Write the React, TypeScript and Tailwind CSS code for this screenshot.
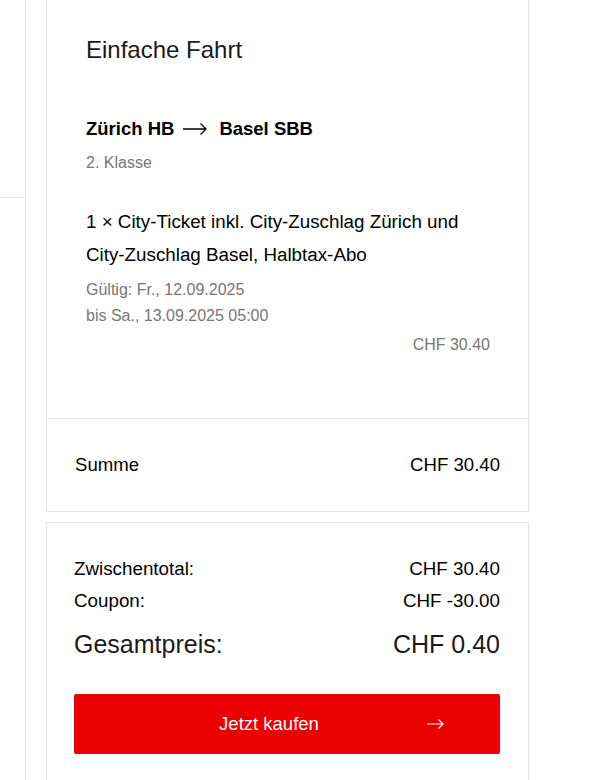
import React from 'react'

function RouteArrow() {
    return (
        <svg width="24" height="12" viewBox="0 0 24 12" fill="none" className="ml-[9px] mr-[12px] shrink-0">
            <path d="M0 6H23M17.5 0.5L23 6L17.5 11.5" stroke="#000" strokeWidth="1.3" />
        </svg>
    )
}

function ButtonArrow() {
    return (
        <svg width="17" height="10" viewBox="0 0 17 10" fill="none" className="shrink-0">
            <path d="M0 5H16M11.5 0.5L16 5L11.5 9.5" stroke="#fff" strokeWidth="1.2" />
        </svg>
    )
}

export default function App() {
    return (
        <div className="flex min-h-[780px] bg-white text-black font-['Liberation_Sans',Arial,sans-serif]">
            {/* linke Spalte */}
            <div className="w-[26px] shrink-0 border-r border-[#e5e5e5]">
                <div className="h-[198px] border-b border-[#e5e5e5]" />
            </div>

            <div className="ml-[20px] w-[483px] shrink-0">
                {/* Warenkorb */}
                <div className="border-x border-b border-[#e5e5e5]">
                    <div className="pl-[39px] pr-[38px] pt-[36px] pb-[63px]">
                        <h2 className="text-[24px] leading-[28px] text-[#1a1a1a]">Einfache Fahrt</h2>

                        <div className="mt-[53px] flex items-center text-[18.5px] leading-[24px] font-bold">
                            <span>Zürich HB</span>
                            <RouteArrow />
                            <span>Basel SBB</span>
                        </div>
                        <div className="mt-[12px] text-[16px] leading-[20px] text-[#767676]">2. Klasse</div>

                        <p className="mt-[32px] text-[18.8px] leading-[33px]">
                            1 × City-Ticket inkl. City-Zuschlag Zürich und City-Zuschlag Basel, Halbtax-Abo
                        </p>
                        <div className="mt-[6px] text-[16px] leading-[26px] text-[#767676]">
                            <div>Gültig: Fr., 12.09.2025</div>
                            <div>bis Sa., 13.09.2025 05:00</div>
                        </div>
                        <div className="mt-[6px] text-right text-[16px] leading-[20px] text-[#767676]">CHF 30.40</div>
                    </div>

                    <div className="flex items-center justify-between border-t border-[#e5e5e5] pl-[28px] pr-[28px] py-[34px] text-[18.6px] leading-[24px]">
                        <span>Summe</span>
                        <span>CHF 30.40</span>
                    </div>
                </div>

                {/* Total */}
                <div className="mt-[10px] border-x border-t border-[#e5e5e5] pl-[27px] pr-[28px] pt-[30px] pb-[30px]">
                    <div className="flex justify-between text-[18.8px] leading-[32px]">
                        <span>Zwischentotal:</span>
                        <span>CHF 30.40</span>
                    </div>
                    <div className="flex justify-between text-[18.8px] leading-[32px]">
                        <span>Coupon:</span>
                        <span>CHF -30.00</span>
                    </div>
                    <div className="mt-[11px] flex justify-between text-[25px] leading-[32px] text-[#1a1a1a]">
                        <span>Gesamtpreis:</span>
                        <span>CHF 0.40</span>
                    </div>

                    <button className="mt-[34px] flex h-[60px] w-full items-center rounded-[2px] bg-[#eb0000] text-white">
                        <span className="flex-1 pl-[37px] text-center text-[18.5px] leading-[24px]">Jetzt kaufen</span>
                        <span className="mr-[56px]">
                            <ButtonArrow />
                        </span>
                    </button>
                </div>
            </div>
        </div>
    )
}
